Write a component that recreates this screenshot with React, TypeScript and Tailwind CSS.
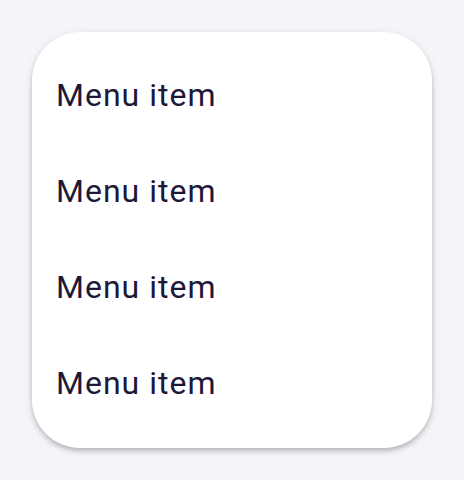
export default function App() {
  const items = ["Menu item", "Menu item", "Menu item", "Menu item"];
  return (
    <div className="w-[464px] h-[480px] bg-[#f5f4f9] p-8" style={{ fontFamily: "Roboto, 'Liberation Sans', sans-serif" }}>
      <div className="w-[400px] h-[416px] bg-white rounded-[48px] py-4 shadow-[0_3px_5px_rgba(0,0,0,0.22),0_2px_12px_rgba(0,0,0,0.06)]">
        {items.map((label, i) => (
          <div key={i} className="h-24 flex items-center px-6 text-[32px] leading-[48px] tracking-[1px] text-[#1d1838] -mt-[1px] mb-[1px]">
            {label}
          </div>
        ))}
      </div>
    </div>
  );
}
